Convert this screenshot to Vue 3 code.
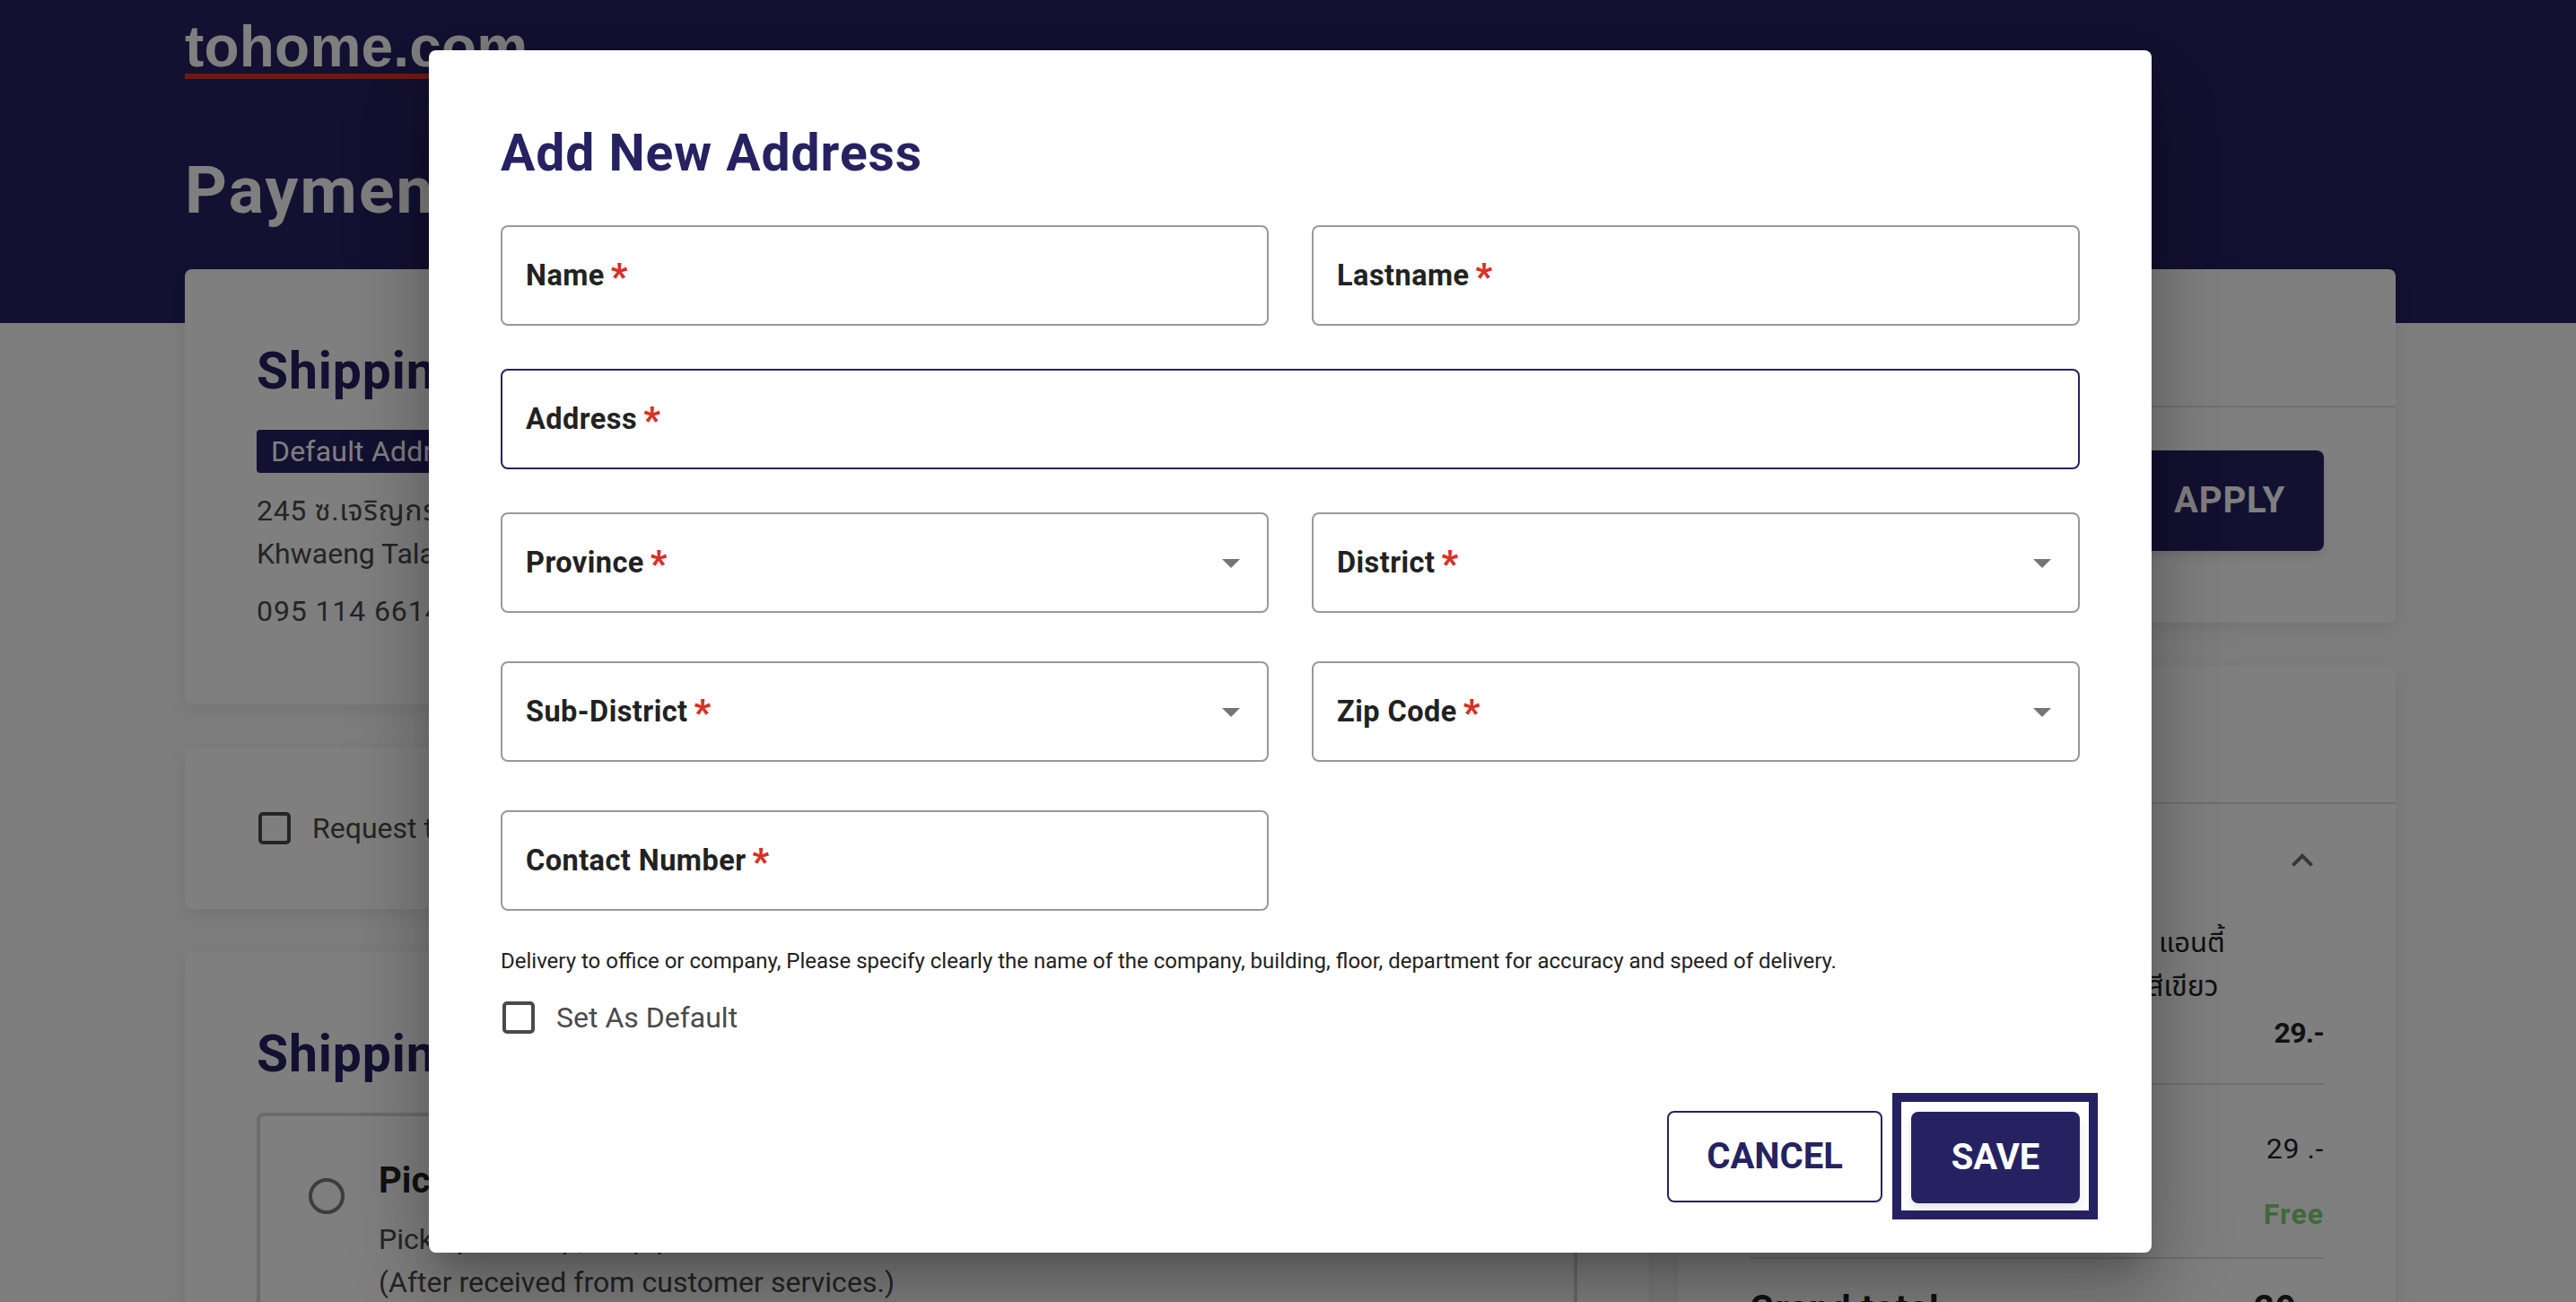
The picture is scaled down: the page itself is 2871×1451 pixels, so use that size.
<script setup>
import { ref } from 'vue';

const fields = ref([
    { id: 'name', label: 'Name' },
    { id: 'lastname', label: 'Lastname' },
    { id: 'address', label: 'Address', wide: true, focused: true },
    { id: 'province', label: 'Province', select: true },
    { id: 'district', label: 'District', select: true },
    { id: 'sub-district', label: 'Sub-District', select: true },
    { id: 'zip', label: 'Zip Code', select: true },
    { id: 'contact', label: 'Contact Number' }
]);
</script>

<template>
    <div class="page">
        <header class="header">
            <div class="logo">tohome.com</div>
            <h1 class="page-title">Payment</h1>
        </header>

        <main class="content">
            <div class="column-main">
                <section class="card shipping-address">
                    <h2 class="section-title">Shipping Address</h2>
                    <span class="badge">Default Address</span>
                    <p class="address-line first">245 ซ.เจริญกรุง</p>
                    <p class="address-line">Khwaeng Talat Noi</p>
                    <p class="address-line phone">095 114 6614</p>
                </section>

                <section class="card tax-request">
                    <span class="checkbox"></span>
                    <span class="checkbox-label">Request tax invoice</span>
                </section>

                <section class="card shipping-method">
                    <h2 class="section-title">Shipping Method</h2>
                    <div class="option">
                        <span class="radio"></span>
                        <div class="option-text">
                            <h3>Pick up</h3>
                            <p>Pick up at Shop, drop point</p>
                            <p>(After received from customer services.)</p>
                        </div>
                    </div>
                </section>
            </div>

            <div class="column-side">
                <section class="card promo">
                    <div class="card-head"></div>
                    <button class="btn apply">APPLY</button>
                </section>

                <section class="card summary">
                    <div class="card-head"></div>
                    <div class="toggle">
                        <svg width="48" height="48" viewBox="0 0 24 24">
                            <path d="M12 8l-6 6 1.41 1.41L12 10.83l4.59 4.58L18 14z" fill="#6e6e6e" />
                        </svg>
                    </div>
                    <div class="product">
                        <p>แอนตี้</p>
                        <p class="line-two">สีเขียว</p>
                    </div>
                    <p class="product-price">29.-</p>
                    <div class="totals">
                        <p class="subtotal">29 .-</p>
                        <p class="free">Free</p>
                    </div>
                    <div class="grand">
                        <span>Grand total</span>
                        <span>29.-</span>
                    </div>
                </section>
            </div>
        </main>

        <!-- Address dialog -->
        <div class="overlay">
            <div class="modal" role="dialog">
                <h2 class="modal-title">Add New Address</h2>

                <div class="form">
                    <div
                        v-for="field in fields"
                        :key="field.id"
                        class="field"
                        :class="[field.id, { wide: field.wide, focused: field.focused }]"
                    >
                        <span class="label">{{ field.label }}</span>
                        <span class="required">*</span>
                        <svg v-if="field.select" class="arrow" width="48" height="48" viewBox="0 0 24 24">
                            <path d="M7 10l5 5 5-5z" fill="#757575" />
                        </svg>
                    </div>
                </div>

                <p class="note">Delivery to office or company, Please specify clearly the name of the company, building, floor, department for accuracy and speed of delivery.</p>

                <div class="default-row">
                    <span class="checkbox"></span>
                    <span class="checkbox-label">Set As Default</span>
                </div>

                <div class="actions">
                    <button class="btn cancel">CANCEL</button>
                    <div class="save-frame">
                        <button class="btn save">SAVE</button>
                    </div>
                </div>
            </div>
        </div>
    </div>
</template>

<style>
body {
    margin: 0;
    overflow: hidden;
}
</style>

<style scoped>
* {
    box-sizing: border-box;
}

.page {
    position: relative;
    height: 1451px;
    overflow: hidden;
    background: #fafafa;
    color: #222;
    font-family: Roboto, "Noto Sans Thai", "Noto Sans", sans-serif;
    font-size: 32px;
    line-height: 48px;
}

h1,
h2,
h3,
p {
    margin: 0;
    white-space: nowrap;
}

/* Page behind the dialog */
.header {
    height: 360px;
    padding: 22px 206px 0;
    background: #262262;
    color: #fff;
}

.logo {
    width: 382px;
    border-bottom: 6px solid #d33825;
    font: bold 64px/60px "Liberation Sans", Arial, sans-serif;
    letter-spacing: 0.2px;
}

.page-title {
    margin-top: 84px;
    font-size: 73px;
    line-height: 80px;
    letter-spacing: 2.2px;
}

.content {
    display: grid;
    grid-template-columns: 1632px 800px;
    gap: 32px;
    margin-top: -60px;
    padding-left: 206px;
}

.column-main,
.column-side {
    display: flex;
    flex-direction: column;
    gap: 48px;
}

.card {
    border-radius: 8px;
    background: #fff;
    box-shadow: 0 6px 20px rgba(0, 0, 0, 0.08);
}

.section-title {
    color: #262262;
    font-size: 57px;
    line-height: 70px;
    letter-spacing: 0.9px;
}

.shipping-address {
    height: 485px;
    padding: 79px 80px;
    color: #4a4a4a;
}

.badge {
    display: block;
    width: fit-content;
    height: 48px;
    margin-top: 30px;
    padding: 0 16px;
    border-radius: 4px;
    background: #262262;
    color: #fff;
    line-height: 49px;
    letter-spacing: 0.2px;
}

.address-line.first {
    margin-top: 18px;
    letter-spacing: 0.7px;
}

.address-line.phone {
    margin-top: 16px;
    letter-spacing: 0.9px;
}

.tax-request {
    display: flex;
    align-items: center;
    height: 180px;
    padding: 0 82px;
}

.checkbox {
    flex: none;
    width: 36px;
    height: 36px;
    border: 4px solid #4a4a4a;
    border-radius: 5px;
}

.checkbox-label {
    margin-left: 24px;
    color: #4a4a4a;
}

.shipping-method {
    height: 500px;
    padding: 79px 80px 0;
}

.option {
    display: flex;
    height: 380px;
    margin-top: 30px;
    border: 4px solid #d4d8d6;
    border-radius: 8px;
    padding-left: 54px;
}

.radio {
    flex: none;
    width: 40px;
    height: 40px;
    margin-top: 69px;
    border: 4px solid #7a7a7a;
    border-radius: 50%;
}

.option-text {
    margin: 42px 0 0 38px;
    color: #4a4a4a;
    letter-spacing: 0.05px;
}

.option-text h3 {
    margin-bottom: 11px;
    color: #222;
    font-size: 40px;
    line-height: 60px;
}

.promo {
    height: 394px;
}

.card-head {
    height: 154px;
    border-bottom: 2px solid #dedede;
}

.btn {
    display: block;
    border: 0;
    border-radius: 8px;
    background: #262262;
    color: #fff;
    font-family: inherit;
    font-size: 40px;
    font-weight: 700;
    line-height: 48px;
    box-shadow: 0 6px 12px rgba(0, 0, 0, 0.1);
}

.apply {
    width: 210px;
    height: 112px;
    margin: 48px 80px 0 auto;
    letter-spacing: 0.9px;
}

.summary {
    height: 760px;
    color: #222;
}

.toggle {
    display: flex;
    justify-content: flex-end;
    height: 131px;
    padding: 39px 80px 0 0;
}

.product {
    padding-left: 536px;
    font-size: 31px;
}

.line-two {
    margin-left: -13px;
    font-size: 32px;
}

.product-price {
    margin-top: 4px;
    padding-right: 80px;
    font-weight: 700;
    letter-spacing: -0.8px;
    text-align: right;
}

.totals {
    height: 196px;
    margin: 32px 80px 0;
    border-top: 2px solid #dedede;
    border-bottom: 2px solid #dedede;
    padding-top: 47px;
    text-align: right;
}

.subtotal {
    letter-spacing: 0.6px;
}

.free {
    margin-top: 25px;
    color: #7ed374;
    font-weight: 700;
    letter-spacing: 1px;
}

.grand {
    display: flex;
    justify-content: space-between;
    margin: 32px 80px 0;
    font-size: 40px;
    font-weight: 700;
    letter-spacing: 1.2px;
}

/* Dialog */
.overlay {
    position: absolute;
    inset: 0;
    padding: 56px 0 0 478px;
    background: rgba(0, 0, 0, 0.5);
}

.modal {
    width: 1920px;
    height: 1340px;
    padding: 80px;
    border-radius: 8px;
    background: #fff;
    box-shadow: 0 22px 30px -14px rgba(0, 0, 0, 0.2), 0 48px 76px 6px rgba(0, 0, 0, 0.14), 0 18px 92px 16px rgba(0, 0, 0, 0.12);
}

.modal-title {
    color: #262262;
    font-size: 57px;
    line-height: 70px;
    letter-spacing: 0.95px;
}

.form {
    display: grid;
    grid-template-columns: 856px 856px;
    grid-template-rows: 112px 112px 112px 112px 112px;
    gap: 48px;
    margin-top: 45px;
}

.field {
    display: flex;
    align-items: center;
    height: 112px;
    padding: 0 16px 0 26px;
    border: 2px solid #999;
    border-radius: 8px;
    font-weight: 700;
}

.label {
    font-size: 32.5px;
    letter-spacing: 0.45px;
}

.wide {
    grid-column: span 2;
}

.focused {
    border-color: #262262;
}

.sub-district,
.zip {
    margin-top: 6px;
}

.contact {
    margin-top: 12px;
}

.required {
    margin: 4px 0 0 7px;
    color: #d93025;
    font-size: 40px;
    font-weight: 900;
}

.arrow {
    margin-left: auto;
}

.note {
    margin-top: 50px;
    font-size: 24px;
    line-height: 36px;
}

.default-row {
    display: flex;
    align-items: center;
    margin-top: 21px;
    padding-left: 2px;
}

.actions {
    display: flex;
    justify-content: flex-end;
    align-items: center;
    margin-top: 60px;
    margin-right: -20px;
}

.cancel {
    width: 240px;
    height: 102px;
    border: 2px solid #262262;
    background: #fff;
    color: #262262;
    box-shadow: none;
}

.save-frame {
    margin-left: 11px;
    padding: 11px 10px 8px 11px;
    border: 10px solid #262262;
}

.save {
    width: 188px;
    height: 102px;
}
</style>
